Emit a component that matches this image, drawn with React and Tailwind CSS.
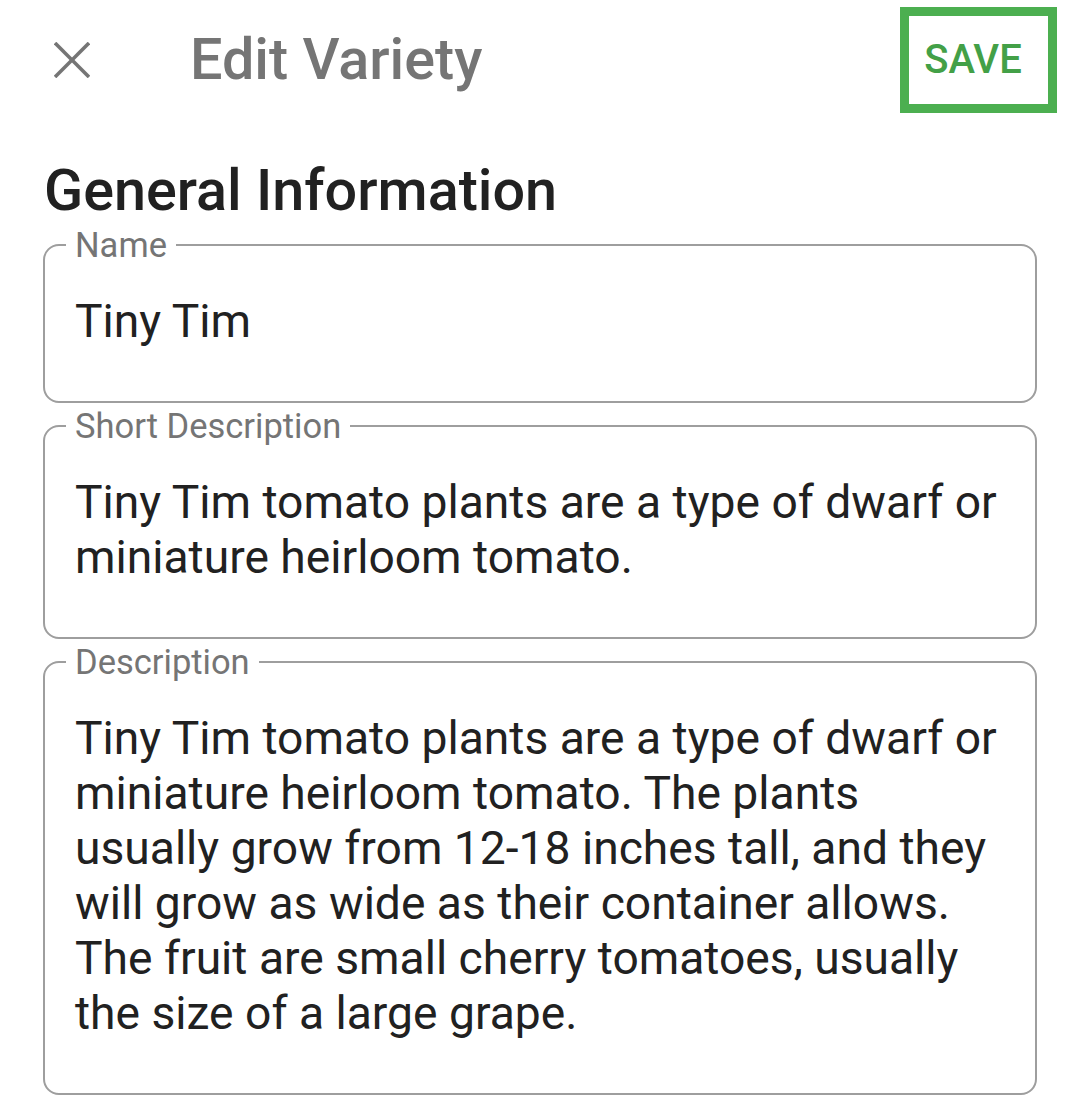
const Field = ({ label, value }) => (
  <fieldset className="border-2 border-[#9e9e9e] rounded-[16px] px-0 pt-[32px] pb-[52px] mx-0 min-w-0">
    <legend className="ml-[21px] px-[9px] text-[34.5px] leading-[34px] text-[#757575]">{label}</legend>
    <p className="pl-[30px] pr-[36px] text-[46.2px] leading-[55px] text-[#212121]">{value}</p>
  </fieldset>
);

export default function App() {
  return (
    <div className="w-[1080px] min-h-[1110px] bg-white font-['Roboto',sans-serif]">
      <header className="flex items-center h-[120px] pl-[54px] pr-[23px]">
        <button className="w-[36px] h-[36px] flex items-center justify-center text-[#757575]">
          <svg width="36" height="36" viewBox="0 0 36 36" fill="none" stroke="currentColor" strokeWidth="3.6">
            <line x1="1" y1="1" x2="35" y2="35" />
            <line x1="35" y1="1" x2="1" y2="35" />
          </svg>
        </button>
        <h1 className="ml-[100px] text-[57.5px] font-medium text-[#757575] leading-none">Edit Variety</h1>
        <button className="ml-auto w-[157px] h-[106px] border-[9px] border-[#4caf50] pr-[11px] text-[40px] font-medium text-[#43a047] leading-none flex items-center justify-center">
          SAVE
        </button>
      </header>
      <main className="px-[43px]">
        <h2 className="text-[57.5px] font-medium text-[#212121] leading-none pt-[42px] pl-px">General Information</h2>
        <div className="flex flex-col gap-[6px] mt-[8px]">
          <Field label="Name" value="Tiny Tim" />
          <Field label="Short Description" value="Tiny Tim tomato plants are a type of dwarf or miniature heirloom tomato." />
          <Field label="Description" value="Tiny Tim tomato plants are a type of dwarf or miniature heirloom tomato. The plants usually grow from 12-18 inches tall, and they will grow as wide as their container allows. The fruit are small cherry tomatoes, usually the size of a large grape." />
        </div>
      </main>
    </div>
  );
}
